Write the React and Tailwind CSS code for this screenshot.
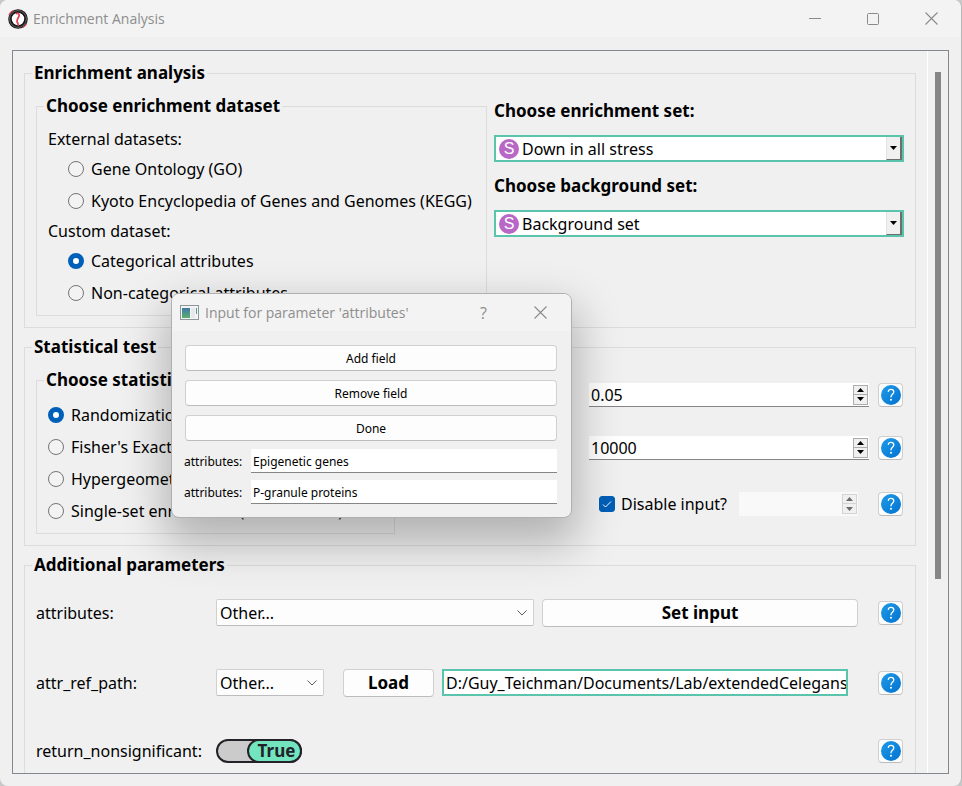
import React from "react";

const bodyFont = "font-['Noto_Sans','DejaVu_Sans',sans-serif]";

function Group({ title, className = "", children }) {
  return (
    <fieldset className={`min-w-0 border border-[#dcdcdc] ${className}`}>
      <legend className="-ml-1 px-0.5 text-[17px] leading-5 font-bold">{title}</legend>
      {children}
    </fieldset>
  );
}

function Radio({ name, label, checked }) {
  return (
    <label className="flex h-8 items-center gap-[7px] whitespace-nowrap">
      <input
        type="radio"
        name={name}
        defaultChecked={checked}
        className="size-4 shrink-0 appearance-none rounded-full border border-[#757575] bg-[#f3f3f3] checked:border-5 checked:border-[#005fb8] checked:bg-white"
      />
      {label}
    </label>
  );
}

function SetSelect({ id, label, value }) {
  return (
    <>
      <label htmlFor={id} className="text-[17px] leading-5 font-bold">
        {label}
      </label>
      <div className="flex h-[27px] items-center border-2 border-[#5bc4ac] bg-white pl-[3px]">
        <span aria-hidden="true" className="flex size-5 shrink-0 items-center justify-center rounded-full bg-[#b967c7] font-['Liberation_Sans',sans-serif] text-base leading-5 text-white">
          S
        </span>
        <select id={id} className="h-full min-w-0 flex-1 appearance-none bg-white pl-[3px] outline-none">
          <option>{value}</option>
        </select>
        <span className="flex h-full w-4 shrink-0 items-center justify-center border-r-2 border-b border-l border-r-[#6d6d6d] border-b-[#6d6d6d] border-l-[#e3e3e3] bg-[#f0f0f0]">
          <svg width="7" height="4" viewBox="0 0 7 4" aria-hidden="true">
            <path d="M0 0h7L3.500 4z" fill="#000" />
          </svg>
        </span>
      </div>
    </>
  );
}

function Combo({ label, id, className }) {
  return (
    <div className={`flex h-[27px] shrink-0 items-center self-start rounded-xs border border-[#d0d0d0] border-b-[#bcbcbc] bg-[#fdfdfd] pr-1.5 ${className}`}>
      <select id={id} aria-label={label} className="h-full min-w-0 flex-1 appearance-none bg-transparent pl-[3px] outline-none">
        <option>Other...</option>
      </select>
      <svg width="10" height="6" viewBox="0 0 10 6" aria-hidden="true" fill="none" stroke="#5c5c5c">
        <path d="M.5.5 5 5 9.500.5" />
      </svg>
    </div>
  );
}

function HelpButton({ label }) {
  return (
    <button type="button" aria-label={label} className="mr-px flex size-6 w-[25px] shrink-0 items-center justify-center rounded-[4px] border border-[#cfcfcf] border-b-[#bcbcbc] bg-[#fdfdfd]">
      <svg width="20" height="20" viewBox="0 0 20 20" className="shrink-0" fill="none" aria-hidden="true">
        <defs>
          <linearGradient id="helpBlue" x1="0" y1="0" x2="1" y2="1">
            <stop offset="0" stopColor="#1f9be8" />
            <stop offset="1" stopColor="#0272d0" />
          </linearGradient>
        </defs>
        <circle cx="10" cy="10" r="10" fill="url(#helpBlue)" />
        <path d="M7.300 6.300C7.500 4.900 8.600 4.300 10 4.300c1.700 0 2.800 1 2.800 2.500 0 2.300-2.800 2.500-2.800 5" stroke="#fff" strokeWidth="1.300" strokeLinecap="round" />
        <circle cx="10" cy="14.800" r="1" fill="#fff" />
      </svg>
    </button>
  );
}

function Spin({ label, value, disabled, className }) {
  const ink = disabled ? "#6b6b6b" : "#000";
  const edge = disabled ? "border-[#d4d4d4]" : "border-[#adadad]";
  return (
    <div className={`flex h-6 items-center pr-px ${disabled ? "bg-[#f9f9f9]" : "border-b border-[#868686] bg-white"} ${className}`}>
      <input type="text" aria-label={label} defaultValue={value} disabled={disabled} className="h-full min-w-0 flex-1 bg-transparent pl-0.5 outline-none" />
      <span className={`flex w-[15px] shrink-0 flex-col border bg-[#f0f0f0] ${edge}`}>
        <button type="button" aria-label="Increase" disabled={disabled} className={`flex h-[9px] items-center justify-center border-b ${edge}`}>
          <svg width="7" height="4" viewBox="0 0 7 4"><path d="M0 4h7L3.500 0z" fill={ink} /></svg>
        </button>
        <button type="button" aria-label="Decrease" disabled={disabled} className="flex h-[9px] items-center justify-center">
          <svg width="7" height="4" viewBox="0 0 7 4"><path d="M0 0h7L3.500 4z" fill={ink} /></svg>
        </button>
      </span>
    </div>
  );
}

function AppLogo() {
  return (
    <svg width="20" height="20" viewBox="0 0 20 20" fill="none" aria-hidden="true">
      <circle cx="10" cy="10" r="8" fill="#fff" stroke="#161616" strokeWidth="3.600" />
      <circle cx="10" cy="10" r="8.400" stroke="#8a8a8a" strokeWidth=".7" />
      <path d="M.8 6A10 10 0 0 1 5.500 1.200M18.500 15a9.500 9.500 0 0 1-3.500 3.500" stroke="#e25563" strokeWidth="1.200" />
      <path d="M8.500 4.500c1.800-.5 3 .8 2.600 2.400S8.800 9.800 9 12.200s1.600 2 1.200 4" stroke="#e0455a" strokeWidth="1.800" strokeLinecap="round" />
    </svg>
  );
}

function CloseIcon({ size = 13 }) {
  return (
    <svg width={size} height={size} viewBox="0 0 13 13" fill="none" stroke="#8a8a8a" strokeWidth="1.100" aria-hidden="true">
      <path d="M.5.5l12 12M12.500.5l-12 12" />
    </svg>
  );
}

function TitleBar() {
  return (
    <header className="flex h-[37px] shrink-0 items-center bg-[#f3f3f3] pr-[23px] pl-2 text-[#8e8e8e]">
      <AppLogo />
      <h1 className="ml-[5px] flex-1 font-['Open_Sans',sans-serif] text-sm">Enrichment Analysis</h1>
      <div className="flex items-center gap-[46px]">
        <button type="button" aria-label="Minimize">
          <svg width="12" height="12" viewBox="0 0 12 12" stroke="#8a8a8a"><path d="M0 5.500h12" /></svg>
        </button>
        <button type="button" aria-label="Maximize">
          <svg width="12" height="12" viewBox="0 0 12 12" fill="none" stroke="#8a8a8a"><rect x=".5" y=".5" width="11" height="11" rx="1" /></svg>
        </button>
        <button type="button" aria-label="Close"><CloseIcon /></button>
      </div>
    </header>
  );
}

const dialogButtons = ["Add field", "Remove field", "Done"];
const dialogFields = ["Epigenetic genes", "P-granule proteins"];

function AttributesDialog() {
  return (
    <section
      role="dialog"
      aria-labelledby="dialog-title"
      className="absolute top-[293px] left-[171px] w-[401px] overflow-hidden rounded-lg border border-[#b0b0b0] bg-[#f0f0f0] text-xs shadow-[0_20px_44px_6px_rgba(0,0,0,0.26)]"
    >
      <header className="flex h-[37px] items-center bg-[#f3f3f3] pr-6 pl-2 text-[#8e8e8e]">
        <svg width="19" height="16" viewBox="0 0 19 16" aria-hidden="true">
          <defs>
            <linearGradient id="paneTint" x1="0" y1="0" x2="0" y2="1">
              <stop offset="0" stopColor="#3f78a8" />
              <stop offset="1" stopColor="#5bb06c" />
            </linearGradient>
          </defs>
          <rect x=".5" y=".5" width="18" height="14" fill="#f4f4f4" stroke="#8d979c" />
          <rect x="2" y="3" width="8" height="10" fill="url(#paneTint)" />
          <rect x="11" y="3" width="4" height="10" fill="#e6e8ea" />
          <rect x="16" y="3" width="1" height="6" fill="#4ba08c" />
        </svg>
        <h2 id="dialog-title" className="ml-1.5 flex-1 font-['Open_Sans',sans-serif] text-sm">
          Input for parameter 'attributes'
        </h2>
        <button type="button" aria-label="Help" className="mr-[47px] font-['Open_Sans',sans-serif] text-base">?</button>
        <button type="button" aria-label="Close"><CloseIcon /></button>
      </header>
      <div className="flex flex-col gap-[9px] pt-3.5 pr-[14px] pb-2 pl-[13px]">
        {dialogButtons.map((text) => (
          <button key={text} type="button" className="h-[26px] rounded-[4px] border border-[#d0d0d0] border-b-[#bcbcbc] bg-[#fdfdfd] pt-0.5">
            {text}
          </button>
        ))}
      </div>
      <div className="flex flex-col gap-[7px] pr-[14px] pb-[13px] pl-3">
        {dialogFields.map((text, i) => (
          <div key={text} className="flex h-6 items-center">
            <label htmlFor={`attribute-${i}`} className="w-[67px] pt-0.5">attributes:</label>
            <input id={`attribute-${i}`} type="text" defaultValue={text} className="h-full min-w-0 flex-1 border-b border-[#868686] bg-white pt-0.5 pl-0.5 outline-none" />
          </div>
        ))}
      </div>
    </section>
  );
}

export default function App() {
  return (
    <div className={`bg-[#c8c8c8] text-base leading-5 text-black ${bodyFont}`}>
      <main className="relative flex h-screen flex-col overflow-hidden rounded-lg border-r border-[#b8b8b8] bg-[#f0f0f0]">
        <TitleBar />
        <div className="mx-3 mt-[13px] mb-3 flex min-h-0 flex-1 overflow-hidden border border-[#828790]">
          <form className="flex min-w-0 flex-1 flex-col gap-[9px] px-[11px] pt-3">
            <Group title="Enrichment analysis" className="shrink-0 px-[11px] pt-[13px] pb-[11px]">
              <div className="flex gap-[7px]">
                <Group title="Choose enrichment dataset" className="w-[451px] shrink-0 px-[11px] pt-[9px] pb-1.5">
                  <p className="h-7 leading-7">External datasets:</p>
                  <div className="pl-5">
                    <Radio name="dataset" label="Gene Ontology (GO)" />
                    <Radio name="dataset" label="Kyoto Encyclopedia of Genes and Genomes (KEGG)" />
                  </div>
                  <p className="h-7 leading-7">Custom dataset:</p>
                  <div className="pl-5">
                    <Radio name="dataset" label="Categorical attributes" checked />
                    <Radio name="dataset" label="Non-categorical attributes" />
                  </div>
                </Group>
                <div className="flex min-w-0 flex-1 flex-col gap-[14px] pt-[5px]">
                  <SetSelect id="enrichment-set" label="Choose enrichment set:" value="Down in all stress" />
                  <SetSelect id="background-set" label="Choose background set:" value="Background set" />
                </div>
              </div>
            </Group>

            <Group title="Statistical test" className="shrink-0 px-[11px] pt-[13px] pb-[11px]">
              <div className="flex justify-between">
                <Group title="Choose statistical test" className="w-[359px] shrink-0 px-[11px] pt-[9px] pb-1.5">
                  <Radio name="test" label="Randomization test" checked />
                  <Radio name="test" label="Fisher's Exact test" />
                  <Radio name="test" label="Hypergeometric test" />
                  <Radio name="test" label="Single-set enrichment (XL-mHG test)" />
                </Group>
                <div className="w-[315px] pt-[13px]">
                  <div className="flex gap-[9px]">
                    <Spin label="alpha" value="0.05" className="flex-1" />
                    <HelpButton label="Help for alpha" />
                  </div>
                  <div className="mt-[29px] flex gap-[9px]">
                    <Spin label="randomization_reps" value="10000" className="flex-1" />
                    <HelpButton label="Help for randomization_reps" />
                  </div>
                  <div className="mt-8 flex items-center pl-2.5">
                    <label className="flex items-center gap-1.5 whitespace-nowrap">
                      <span className="relative flex size-4">
                        <input type="checkbox" defaultChecked className="size-4 appearance-none rounded-[3px] border border-[#757575] checked:border-[#005fb8] checked:bg-[#005fb8]" />
                        <svg className="pointer-events-none absolute inset-0" width="16" height="16" viewBox="0 0 16 16" fill="none" stroke="#fff">
                          <path d="M4 8.500 6.500 11 12 5.500" />
                        </svg>
                      </span>
                      Disable input?
                    </label>
                    <Spin label="random_seed" value="" disabled className="mr-5 ml-auto w-[119px]" />
                    <HelpButton label="Help for random_seed" />
                  </div>
                </div>
              </div>
            </Group>

            <Group title="Additional parameters" className="shrink-0 px-[11px] pt-6 pb-16">
              <div className="flex flex-col gap-[42px]">
                <div className="flex h-7 items-center">
                  <label htmlFor="attributes" className="w-[180px] shrink-0">attributes:</label>
                  <Combo id="attributes" label="attributes" className="w-[318px]" />
                  <button type="button" className="mr-5 ml-2 h-7 flex-1 rounded-[4px] border border-[#d0d0d0] border-b-[#bcbcbc] bg-[#fdfdfd] text-[17px] leading-5 font-bold">
                    Set input
                  </button>
                  <HelpButton label="Help for attributes" />
                </div>
                <div className="flex h-7 items-center">
                  <label htmlFor="attr-ref-path" className="w-[180px] shrink-0">attr_ref_path:</label>
                  <Combo id="attr-ref-path" label="attr_ref_path" className="w-[108px]" />
                  <button type="button" className="mr-2 ml-[19px] h-7 w-[91px] rounded-[4px] border border-[#d0d0d0] border-b-[#bcbcbc] bg-[#fdfdfd] text-[17px] leading-5 font-bold">
                    Load
                  </button>
                  <input
                    type="text"
                    aria-label="Path"
                    defaultValue="D:/Guy_Teichman/Documents/Lab/extendedCelegans"
                    className="mr-[30px] h-[27px] min-w-0 flex-1 self-start border-2 border-[#5bc4ac] bg-white pl-0.5 outline-none"
                  />
                  <HelpButton label="Help for attr_ref_path" />
                </div>
                <div className="flex h-6 items-center">
                  <label htmlFor="nonsignificant" className="w-[180px] shrink-0">return_nonsignificant:</label>
                  <label className="mr-auto flex h-6 w-[86px] justify-end rounded-full border-2 border-[#222228] bg-[#cbcbcb]">
                    <input id="nonsignificant" type="checkbox" defaultChecked className="sr-only" />
                    <span className="-my-0.5 -mr-0.5 flex w-[55px] items-center justify-center rounded-full border-2 border-[#222228] bg-[#72e5bf] pl-1 text-[17px] leading-5 font-bold text-[#222228]">
                      True
                    </span>
                  </label>
                  <HelpButton label="Help for return_nonsignificant" />
                </div>
              </div>
            </Group>
          </form>
          <div className="w-[21px] shrink-0 border-l border-white pt-[21px] pl-[7px]">
            <div className="h-[507px] w-1.5 bg-[#868686]" />
          </div>
        </div>
        <AttributesDialog />
      </main>
    </div>
  );
}
